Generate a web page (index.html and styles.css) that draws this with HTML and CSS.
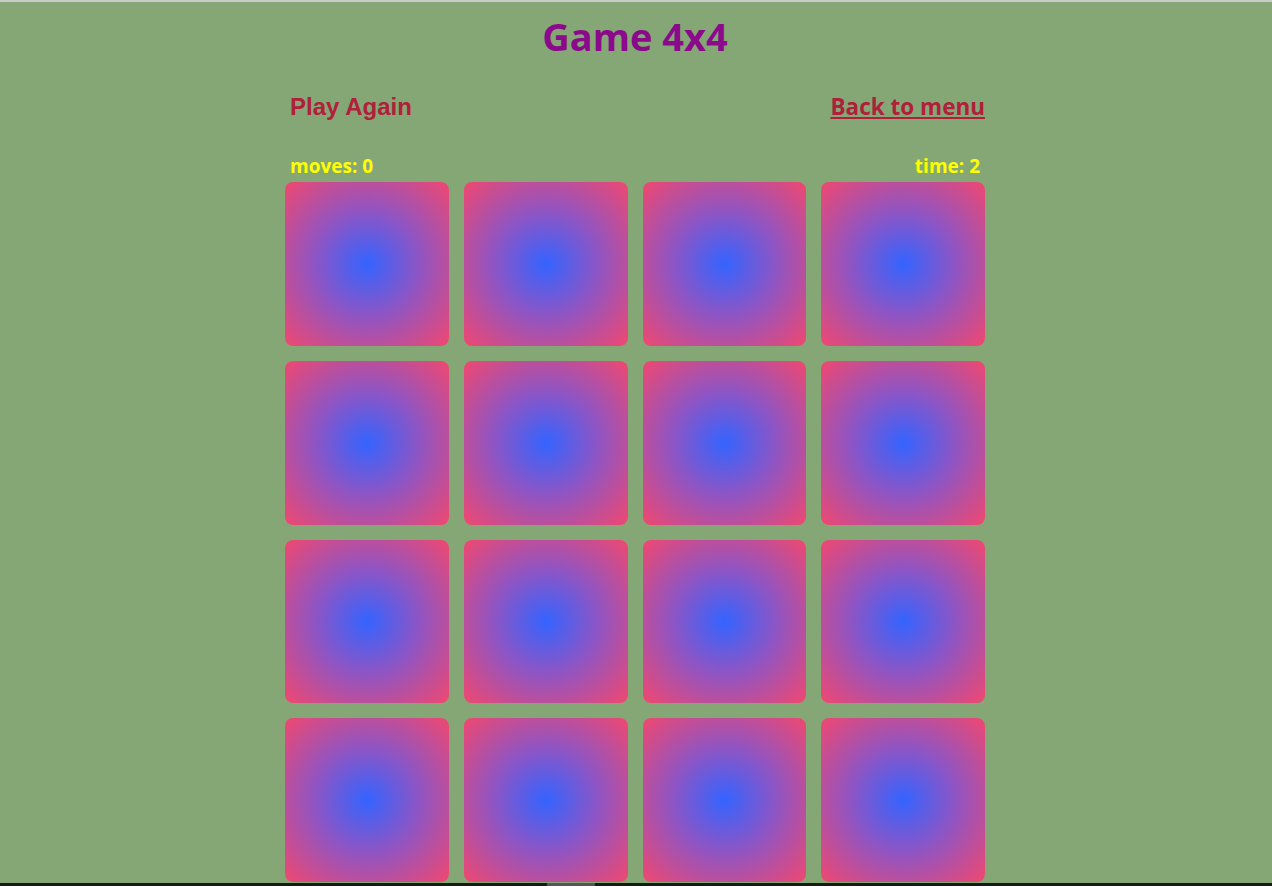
FILE: index.html
```html
<!DOCTYPE html>
<html lang="en">

<head>
    <meta charset="UTF-8">
    <meta name="viewport" content="width=device-width, initial-scale=1.0">
    <title>Game 4x4</title>
    <link rel="stylesheet" href="styles.css">
</head>

<body>

    <h1 class="title">Game 4x4</h1>

    <div class="game">
        <div class="controls">
            <button class="play-again">Play Again</button>
            <a href="#" class="back-link">Back to menu</a>
        </div>

        <div class="stats">
            <span class="moves">moves: 0</span>
            <span class="time">time: 2</span>
        </div>

        <div class="board">
            <div class="card"></div>
            <div class="card"></div>
            <div class="card"></div>
            <div class="card"></div>
            <div class="card"></div>
            <div class="card"></div>
            <div class="card"></div>
            <div class="card"></div>
            <div class="card"></div>
            <div class="card"></div>
            <div class="card"></div>
            <div class="card"></div>
            <div class="card"></div>
            <div class="card"></div>
            <div class="card"></div>
            <div class="card"></div>
        </div>
    </div>

    <div class="taskbar"><span class="thumb"></span></div>

</body>

</html>
```

FILE: styles.css
```css
body {
    margin: 0;
    padding-right: 2px;
    background-color: #85a776;
    border-top: 2px solid #c8cbc6;
    font-family: "Open Sans", sans-serif;
}

.title {
    margin: 10px 0 0;
    text-align: center;
    font-size: 38px;
    line-height: 48px;
    color: #8b0a8b;
}

.game {
    width: 700px;
    margin: 0 auto;
}

.controls {
    display: flex;
    justify-content: space-between;
    align-items: center;
    padding: 0 0 0 5px;
    margin-top: 31px;
}

.play-again {
    background: none;
    border: none;
    padding: 0;
    font-family: "Liberation Sans", Arial, sans-serif;
    font-weight: bold;
    font-size: 24px;
    color: #b0203a;
    cursor: pointer;
}

.back-link {
    font-size: 22.5px;
    font-weight: bold;
    color: #b0203a;
}

.stats {
    display: flex;
    justify-content: space-between;
    padding: 0 5px;
    margin-top: 32px;
    font-size: 19px;
    font-weight: bold;
    line-height: 25px;
    color: #ffff00;
}

.board {
    display: grid;
    grid-template-columns: repeat(4, 1fr);
    gap: 15px;
    margin-top: 3px;
}

.card {
    aspect-ratio: 1;
    border-radius: 8px;
    background: radial-gradient(circle, #3464ff 0%, #8e55c4 45%, #f0486f 100%);
}

.taskbar {
    position: fixed;
    left: 0;
    right: 0;
    bottom: 0;
    height: 3px;
    background-color: #141a14;
}

.thumb {
    position: absolute;
    left: 547px;
    width: 48px;
    top: 0;
    bottom: 0;
    background-color: #555;
}
```
